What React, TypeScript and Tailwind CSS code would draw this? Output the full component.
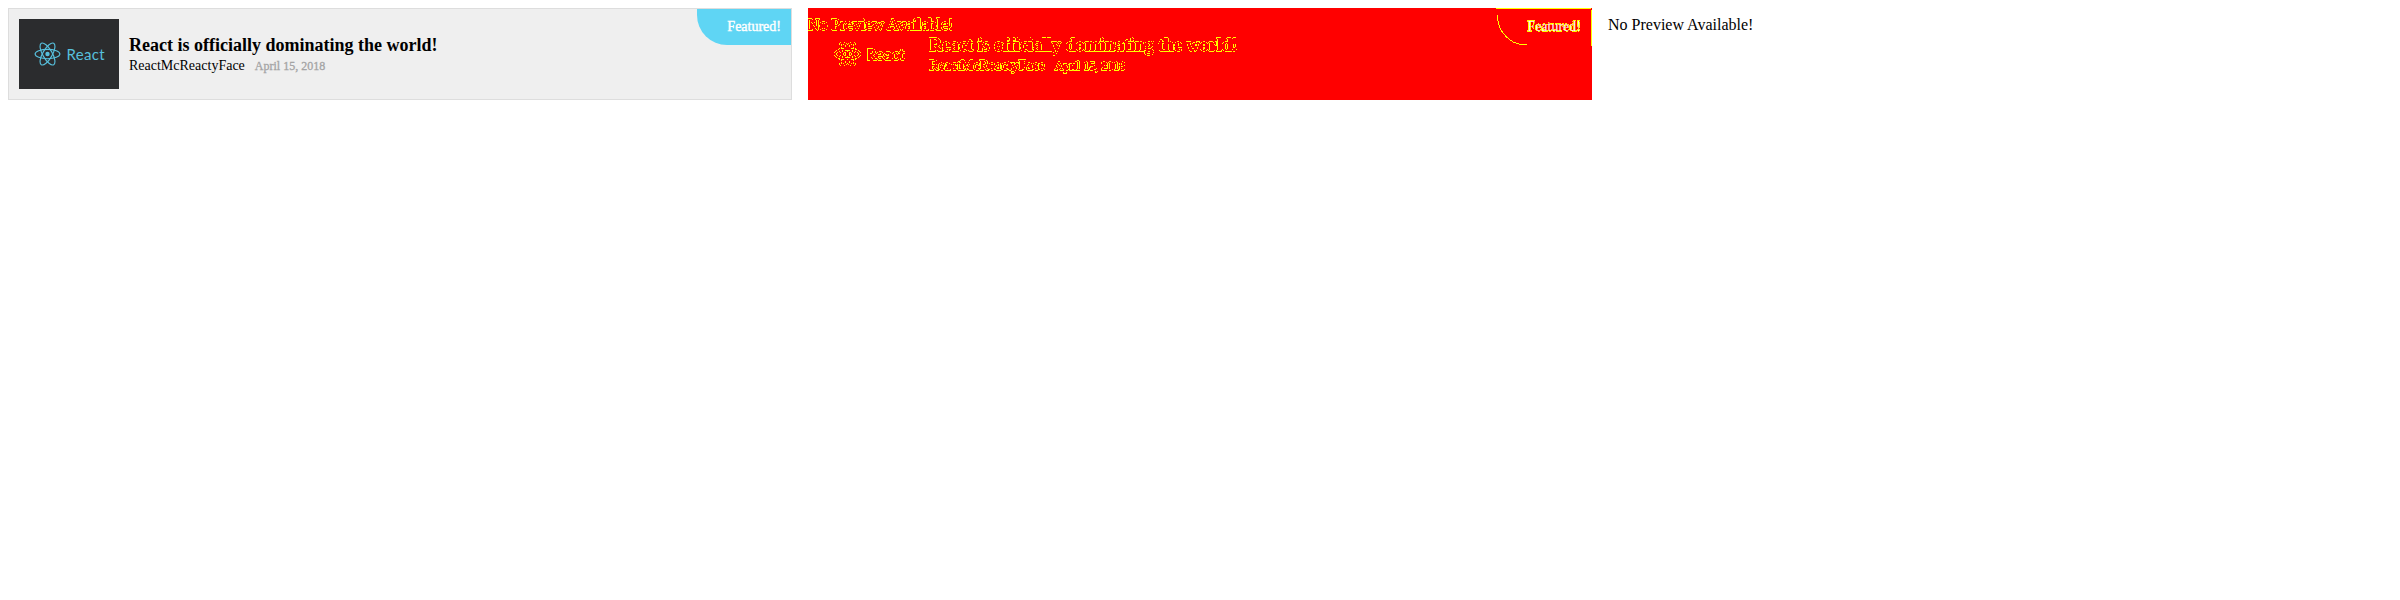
function Atom({ className }: { className: string }) {
  return (
    <svg viewBox="-13.5 -12 27 24" className={className} fill="none" stroke="currentColor">
      <circle r="2.2" fill="currentColor" stroke="none" />
      <ellipse rx="12.4" ry="4.7" />
      <ellipse rx="12.4" ry="4.7" transform="rotate(60)" />
      <ellipse rx="12.4" ry="4.7" transform="rotate(120)" />
    </svg>
  );
}

function Thumbnail({ diff }: { diff?: boolean }) {
  return (
    <div
      className={
        diff
          ? "flex h-[70px] w-[100px] shrink-0 items-center pl-[14.5px] text-[#ffff00]"
          : "flex h-[70px] w-[100px] shrink-0 items-center bg-[#2b2c2e] pl-[14.5px] text-[#57bfdc]"
      }
    >
      <Atom className={diff ? "h-6 w-[27px] [stroke-width:2]" : "h-6 w-[27px] [stroke-width:1.15]"} />
      <span
        className={
          diff
            ? "ml-[6px] font-['Lato','Noto_Sans',sans-serif] text-[15px] leading-5 tracking-[0.3px] [-webkit-text-stroke:0.9px_#ffff00]"
            : "ml-[6px] font-['Lato','Noto_Sans',sans-serif] text-[15px] leading-5 tracking-[0.3px]"
        }
      >
        React
      </span>
    </div>
  );
}

function Story({ diff }: { diff?: boolean }) {
  return (
    <div className={diff ? "flex h-full items-center p-[10px] text-[#ffff00]" : "flex h-full items-center p-[10px] text-black"}>
      <Thumbnail diff={diff} />
      <div className={diff ? "ml-[10px] mt-[3px] whitespace-nowrap [-webkit-text-stroke:0.6px_#ffff00]" : "ml-[10px] mt-[3px] whitespace-nowrap"}>
        <div className="text-[18px] font-bold leading-[21px]">React is officially dominating the world!</div>
        <div className="flex items-baseline leading-[20px]">
          <span className="text-[14px]">ReactMcReactyFace</span>
          <span className={diff ? "ml-[10px] text-[12px]" : "ml-[10px] text-[12px] text-[#a4a4a4] [-webkit-text-stroke:0.3px_#a4a4a4]"}>
            April 15, 2018
          </span>
        </div>
      </div>
    </div>
  );
}

export default function App() {
  return (
    <main className="flex h-[600px] w-[2400px] items-start gap-4 bg-white p-2 font-['Liberation_Serif',serif]">
      <svg className="absolute size-0" aria-hidden="true">
        <filter id="edges" x="-0.02" y="-0.1" width="1.04" height="1.2">
          <feComponentTransfer>
            <feFuncA type="discrete" tableValues="0 0.9 1 1 1 1 0 0" />
          </feComponentTransfer>
        </filter>
      </svg>

      <section className="relative h-[92px] w-[784px] border border-[#dddddd] bg-[#efefef]">
        <Story />
        <div className="absolute right-0 top-0 h-9 w-[94px] rounded-bl-[30px] bg-[#5fd5f4] pr-[10px] pt-[10px] text-right text-[14px] leading-4 text-white [-webkit-text-stroke:0.4px_white]">
          Featured!
        </div>
      </section>

      <section className="relative h-[92px] w-[784px] overflow-hidden bg-[#ff0000]">
        <div className="h-full border border-transparent [filter:url(#edges)]">
          <Story diff />
        </div>
        <div className="absolute left-0 top-2 text-[16px] leading-[18px] text-[#ffff00] [-webkit-text-stroke:0.7px_#ffff00] [filter:url(#edges)]">
          No Preview Available!
        </div>
        <svg className="absolute right-0 top-0 h-[38px] w-24" viewBox="0 0 96 38" fill="none" stroke="#ffff00" shapeRendering="crispEdges">
          <path d="M0 .5H95M95.5 2V38M1.5 7V10C2.5 24 14 35 25 36.5H31" />
        </svg>
        <div className="absolute right-[11px] top-[11px] text-[14px] leading-4 text-white">Featured!</div>
        <div className="absolute right-[11px] top-[11px] text-[14px] leading-4 text-[#ffff00] [-webkit-text-stroke:0.6px_#ffff00] [filter:url(#edges)]">
          Featured!
        </div>
      </section>

      <section className="pt-2 text-[16px] leading-[18px] text-black">No Preview Available!</section>
    </main>
  );
}
